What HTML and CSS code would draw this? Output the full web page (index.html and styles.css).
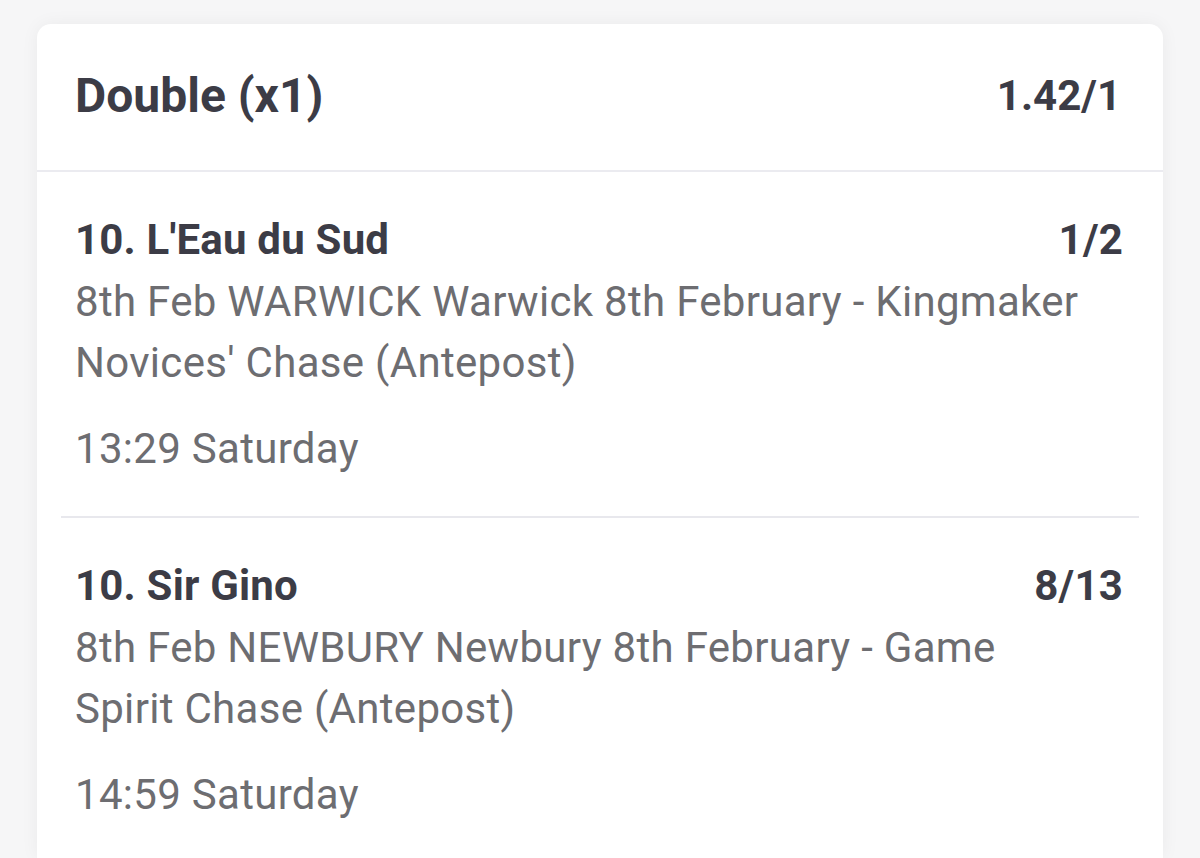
FILE: index.html
```html
<!DOCTYPE html>
<html lang="en">
<head>
<meta charset="utf-8">
<title>Bet slip</title>
<link rel="stylesheet" href="styles.css">
</head>
<body>
<div class="card">
  <div class="card-header">
    <span class="bet-type">Double (x1)</span>
    <span class="bet-odds">1.42/1</span>
  </div>
  <div class="selection">
    <div class="sel-top">
      <span class="sel-name">10. L'Eau du Sud</span>
      <span class="sel-odds">1/2</span>
    </div>
    <div class="sel-event">8th Feb WARWICK Warwick 8th February - Kingmaker Novices' Chase (Antepost)</div>
    <div class="sel-time">13:29 Saturday</div>
  </div>
  <div class="selection">
    <div class="sel-top">
      <span class="sel-name">10. Sir Gino</span>
      <span class="sel-odds">8/13</span>
    </div>
    <div class="sel-event">8th Feb NEWBURY Newbury 8th February - Game Spirit Chase (Antepost)</div>
    <div class="sel-time">14:59 Saturday</div>
  </div>
</div>
</body>
</html>
```
FILE: styles.css
```css
html, body {
  margin: 0;
  padding: 0;
}
body {
  background: #f6f6f7;
  font-family: Roboto, "Noto Sans", sans-serif;
  height: 858px;
  overflow: hidden;
}
.card {
  margin: 24px 37px 0 37px;
  background: #ffffff;
  border-radius: 14px 14px 0 0;
  box-shadow: 0 0 18px rgba(0, 0, 0, 0.05);
  height: 834px;
  overflow: hidden;
}
.card-header {
  display: flex;
  justify-content: space-between;
  align-items: center;
  height: 148px;
  box-sizing: border-box;
  padding: 0 42px 3px 38px;
  border-bottom: 2px solid #ebebf0;
  color: #3c3c46;
  font-weight: 700;
  font-size: 48px;
  line-height: 56px;
}
.bet-odds {
  font-size: 42px;
}
.selection {
  margin: 0 24px;
  padding: 37px 16px 37px 14px;
  border-bottom: 2px solid #e8e8ed;
}
.selection:last-child {
  border-bottom: none;
}
.sel-top {
  display: flex;
  justify-content: space-between;
  font-weight: 700;
  font-size: 42px;
  letter-spacing: 0.2px;
  line-height: 62px;
  color: #3c3c46;
}
.sel-event {
  font-size: 42px;
  letter-spacing: 0.3px;
  line-height: 61px;
  color: #6d6d71;
  padding-right: 25px;
}
.sel-time {
  margin-top: 26px;
  font-size: 42px;
  letter-spacing: 0.3px;
  line-height: 60px;
  color: #6d6d71;
}
```
